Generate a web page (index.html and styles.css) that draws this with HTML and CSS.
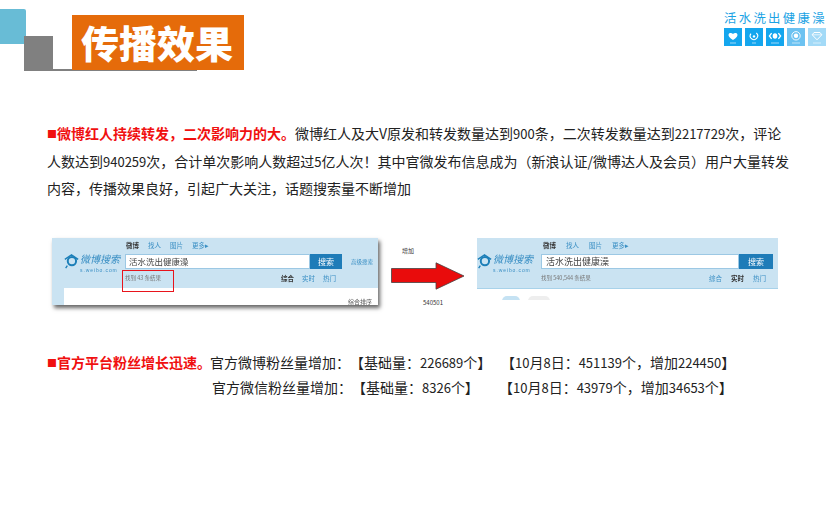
FILE: index.html
```html
<!DOCTYPE html>
<html lang="zh-CN">
<head>
<meta charset="utf-8">
<title>传播效果</title>
<link rel="stylesheet" href="styles.css">
</head>
<body>
<div class="slide">
  <header class="head">
    <div class="deco-blue"></div>
    <div class="deco-gray"></div>
    <div class="deco-line"></div>
    <h1 class="title">传播效果</h1>
    <div class="brand">
      <div class="brand-name">活水洗出健康澡</div>
      <div class="brand-icons">
        <span class="tile t1"><svg viewBox="0 0 18 18"><path d="M9 12C5.500 10 4.200 8.200 4.600 6.300 5 4.700 7.700 4.300 9 6 10.300 4.300 13 4.700 13.400 6.300 13.800 8.200 12.500 10 9 12Z" fill="#fff"/><path d="M6 15h6" stroke="#bfe6fb" stroke-width=".8"/></svg></span>
        <span class="tile t1"><svg viewBox="0 0 18 18"><path d="M11.300 5A3.700 3.700 0 1 1 6 5.600" fill="none" stroke="#fff" stroke-width="1.100"/><circle cx="9" cy="8.400" r="1.200" fill="#fff"/><path d="M7 15h4" stroke="#bfe6fb" stroke-width=".8"/></svg></span>
        <span class="tile t1"><svg viewBox="0 0 18 18"><ellipse cx="9" cy="8" rx="2.300" ry="2.800" fill="#fff"/><path d="M5.600 5.200 3.400 8l2.200 2.800M12.400 5.200 14.600 8l-2.200 2.800" fill="none" stroke="#fff" stroke-width="1.300"/><path d="M5 15h8" stroke="#bfe6fb" stroke-width=".8"/></svg></span>
        <span class="tile t2"><svg viewBox="0 0 18 18"><circle cx="9" cy="7.800" r="4.200" fill="none" stroke="#fff" stroke-width=".9"/><circle cx="9" cy="7.800" r="2.200" fill="#fff"/><path d="M5 15h8" stroke="#d5effc" stroke-width=".8"/></svg></span>
        <span class="tile t3"><svg viewBox="0 0 18 18"><path d="M6 4.500h6L13.800 6.800 9 11.800 4.200 6.800Z" fill="none" stroke="#fff" stroke-width="1"/><path d="M4.400 6.800h9.200" stroke="#fff" stroke-width=".7"/><path d="M5 15h8" stroke="#e2f4fd" stroke-width=".8"/></svg></span>
      </div>
    </div>
  </header>

  <section class="para">
    <p class="line"><span class="hot"><span class="sq">■</span>微博红人持续转发<span class="p">，</span>二次影响力的大<span class="p">。</span></span>微博红人及大V原发和转发数量达到<span class="n">900</span>条<span class="p">，</span>二次转发数量达到<span class="n">2217729</span>次<span class="p">，</span>评论</p>
    <p class="line">人数达到<span class="n">940259</span>次<span class="p">，</span>合计单次影响人数超过<span class="n">5</span>亿人次<span class="p">！</span>其中官微发布信息成为（新浪认证/微博达人及会员）用户大量转发</p>
    <p class="line">内容<span class="p">，</span>传播效果良好<span class="p">，</span>引起广大关注<span class="p">，</span>话题搜索量不断增加</p>
  </section>

  <section class="shots">
    <div class="shot shot-l">
      <div class="shot-top">
        <div class="wb-logo">
          <svg class="wb-mark" viewBox="0 0 18 18"><circle cx="9.500" cy="8.500" r="5" fill="none" stroke="#1c7fb8" stroke-width="2.400"/><path d="M1 6.500 9 1l8 5.500M4 14l-2 3" fill="none" stroke="#1c7fb8" stroke-width="1.600"/></svg>
          <div class="wb-words"><span class="wb-cn">微博搜索</span><span class="wb-en">s.weibo.com</span></div>
        </div>
        <div class="wb-main">
          <nav class="wb-nav"><b>微博</b><span>找人</span><span>图片</span><span>更多▸</span></nav>
          <div class="wb-search">
            <div class="wb-input">活水洗出健康澡</div>
            <div class="wb-btn">搜索</div>
            <span class="wb-adv">高级搜索</span>
          </div>
          <div class="wb-foot">
            <span class="wb-count boxed">找到 43 条结果</span>
            <div class="wb-tabs"><b>综合</b><span>实时</span><span>热门</span></div>
          </div>
        </div>
      </div>
      <div class="wb-body"><span class="wb-sort">综合排序</span></div>
    </div>

    <div class="mid">
      <div class="mid-a">增加</div>
      <svg class="arrow" viewBox="0 0 74 28"><path d="M.5 6.500H45V.8L73 14 45 27.200V20.500H.5Z" fill="#e90c0c" stroke="#444" stroke-width=".8"/></svg>
      <div class="mid-b">540501</div>
    </div>

    <div class="shot shot-r">
      <div class="shot-top">
        <div class="wb-logo">
          <svg class="wb-mark" viewBox="0 0 18 18"><circle cx="9.500" cy="8.500" r="5" fill="none" stroke="#1c7fb8" stroke-width="2.400"/><path d="M1 6.500 9 1l8 5.500M4 14l-2 3" fill="none" stroke="#1c7fb8" stroke-width="1.600"/></svg>
          <div class="wb-words"><span class="wb-cn">微博搜索</span><span class="wb-en">s.weibo.com</span></div>
        </div>
        <div class="wb-main">
          <nav class="wb-nav"><b>微博</b><span>找人</span><span>图片</span><span>更多▸</span></nav>
          <div class="wb-search">
            <div class="wb-input">活水洗出健康澡</div>
            <div class="wb-btn">搜索</div>
          </div>
          <div class="wb-foot">
            <span class="wb-count">找到 540,544 条结果</span>
            <div class="wb-tabs"><span>综合</span><b>实时</b><span>热门</span></div>
          </div>
        </div>
      </div>
      <div class="wb-body"><div class="pills"><i class="pill p1"></i><i class="pill p2"></i></div></div>
    </div>
  </section>

  <section class="fans">
    <p class="fan-row"><span class="hot fan-lead"><span class="sq">■</span>官方平台粉丝增长迅速<span class="p">。</span></span><span class="fan-a">官方微博粉丝量增加<span class="p">：</span>【基础量<span class="p">：</span><span class="n">226689</span>个】</span><span class="fan-b">【<span class="n">10</span>月<span class="n">8</span>日<span class="p">：</span><span class="n">451139</span>个<span class="p">，</span>增加<span class="n">224450</span>】</span></p>
    <p class="fan-row"><span class="fan-lead"></span><span class="fan-a fan-a2">官方微信粉丝量增加<span class="p">：</span>【基础量<span class="p">：</span><span class="n">8326</span>个】</span><span class="fan-b">【<span class="n">10</span>月<span class="n">8</span>日<span class="p">：</span><span class="n">43979</span>个<span class="p">，</span>增加<span class="n">34653</span>个】</span></p>
  </section>
</div>
</body>
</html>
```

FILE: styles.css
```css
* { box-sizing: border-box; margin: 0; padding: 0; }
html, body { width: 840px; height: 512px; overflow: hidden; background: #fff; }
body { font-family: "Noto Sans CJK SC", "Noto Sans", sans-serif; color: #222; text-spacing-trim: space-all; }
.slide { width: 840px; height: 512px; display: flex; flex-direction: column; }

.head { position: relative; height: 120px; flex: none; }
.deco-blue { position: absolute; left: 0; top: 9px; width: 26px; height: 35px; background: #68bcd6; border-radius: 0 2px 2px 0; }
.deco-gray { position: absolute; left: 24px; top: 36px; width: 29px; height: 35px; background: #808080; }
.deco-line { position: absolute; left: 24px; top: 69px; width: 173px; height: 2px; background: #808080; }
.title { position: absolute; left: 72px; top: 15px; width: 172px; height: 55px; background: #e56b0a; color: #fff; font-size: 38px; font-weight: 900; line-height: 54px; padding-left: 9px; white-space: nowrap; }

.brand { position: absolute; left: 724px; top: 11px; width: 104px; }
.brand-name { color: #1ba3e4; font-size: 12.400px; line-height: 15px; letter-spacing: 2.300px; white-space: nowrap; }
.brand-icons { display: flex; gap: 3px; margin-top: 2px; }
.tile { width: 18px; height: 18px; display: block; }
.tile svg { display: block; width: 18px; height: 18px; }
.t1 { background: #14a6ee; }
.t2 { background: #6cc2f1; }
.t3 { background: #a3daf7; }

.para { padding-left: 47px; flex: none; height: 118px; }
.line { font-size: 14px; line-height: 26.500px; white-space: nowrap; }
.hot { color: #f01010; font-weight: 700; }
.sq { font-size: 10px; display: inline-block; width: 10px; vertical-align: 1px; }
.p { font-family: "Noto Sans CJK TC", sans-serif; }
.n { font-size: 13px; }

.shots { display: flex; height: 82px; flex: none; padding-left: 52px; }
.shot { background: #cae3f2; height: 67px; flex: none; display: flex; flex-direction: column; overflow: hidden; filter: blur(.35px); }
.shot-l { width: 326px; box-shadow: 2px 3px 4px #666; overflow: visible; }
.shot-r { width: 301px; height: 62px; }
.shot-top { display: flex; height: 50px; flex: none; }
.wb-logo { width: 73px; display: flex; align-items: flex-start; padding: 14px 0 0 12px; gap: 1px; flex: none; }
.shot-r .wb-logo { width: 64px; padding-left: 0; }
.wb-mark { width: 15px; height: 17px; flex: none; margin-top: 1px; }
.wb-words { display: flex; flex-direction: column; color: #3a8fc4; }
.wb-cn { font-size: 10px; line-height: 14.500px; font-style: italic; white-space: nowrap; }
.wb-en { font-family: "Liberation Sans", sans-serif; font-size: 5px; line-height: 6px; letter-spacing: .9px; white-space: nowrap; }
.wb-main { flex: 1; display: flex; flex-direction: column; min-width: 0; }
.wb-nav { display: flex; gap: 9px; font-size: 6.500px; line-height: 8px; color: #3a8fc4; padding: 3px 0 0 1px; height: 16px; }
.shot-r .wb-nav { gap: 10px; padding-left: 2px; }
.wb-nav b { color: #333; }
.wb-search { display: flex; align-items: center; height: 15px; }
.wb-input { width: 185px; height: 15px; background: #fff; border: 1px solid #9cc8e4; font-size: 8.500px; line-height: 13px; padding-left: 3px; color: #444; white-space: nowrap; }
.shot-r .wb-input { width: 198px; font-size: 9px; padding-left: 4px; }
.wb-btn { width: 32px; height: 15px; background: #1f7cb8; color: #fff; font-size: 8px; line-height: 15px; text-align: center; }
.shot-r .wb-btn { width: 34px; }
.wb-adv { font-size: 5.500px; color: #3a8fc4; margin-left: 9px; white-space: nowrap; }
.wb-foot { position: relative; display: flex; justify-content: space-between; height: 19px; padding-top: 5px; }
.wb-count { font-size: 5.500px; line-height: 8px; color: #777; white-space: nowrap; }
.boxed::after { content: ""; position: absolute; left: -3px; top: 1px; width: 50px; height: 20px; border: 1.500px solid #e8141c; }
.wb-tabs { display: flex; gap: 8px; font-size: 6.500px; line-height: 8px; color: #3a8fc4; margin-right: 12px; }
.shot-l .wb-tabs { margin-right: 42px; }
.shot-r .wb-tabs { gap: 9px; margin-right: 12px; }
.wb-tabs b { color: #333; }
.wb-body { flex: 1; background: #fff; margin-left: 12px; display: flex; justify-content: flex-end; align-items: flex-end; }
.shot-r .wb-body { margin-left: 0; justify-content: flex-start; border-top: 1px solid #a8d2ea; }
.wb-sort { font-size: 6px; line-height: 7px; color: #555; margin-right: 6px; }
.pills { display: flex; gap: 8px; padding: 0 0 0 25px; height: 4px; overflow: hidden; }
.pill { display: block; height: 10px; border-radius: 6px; }
.p1 { width: 18px; background: #c5e2f3; }
.p2 { width: 22px; background: #eeeeee; }

.mid { width: 99px; flex: none; position: relative; font-size: 6px; line-height: 8px; color: #333; }
.mid-a { position: absolute; left: 24px; top: 9px; white-space: nowrap; }
.arrow { position: absolute; left: 13px; top: 24px; width: 74px; height: 28px; display: block; }
.mid-b { position: absolute; left: 45px; top: 61px; white-space: nowrap; }

.fans { padding: 30px 0 0 47px; flex: none; }
.fan-row { display: flex; font-size: 14px; line-height: 25px; white-space: nowrap; }
.fan-lead { width: 163px; flex: none; }
.fan-a { width: 291px; flex: none; }
.fan-a2 { width: 287px; margin-left: 2px; }
```
